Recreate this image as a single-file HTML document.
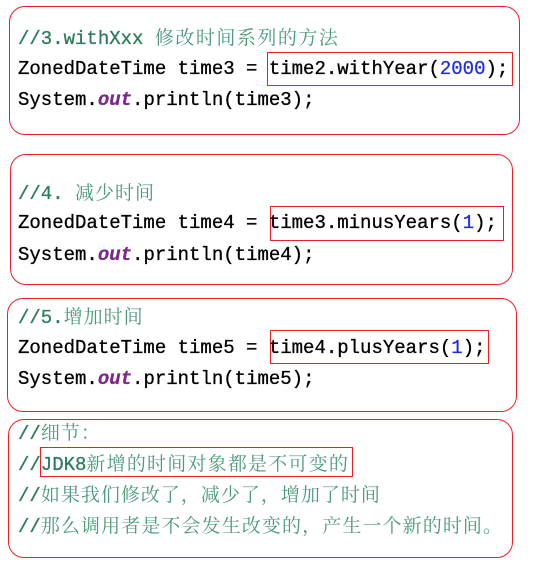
<!DOCTYPE html>
<html><head><meta charset="utf-8"><style>
body{margin:0;width:545px;height:567px;background:#fff;position:relative;overflow:hidden;font-family:"Liberation Mono","Noto Sans CJK SC",monospace;font-size:19px;}
.b{position:absolute;border:1px solid #e8202a;border-radius:16px;box-sizing:border-box;}
.r{position:absolute;border:1px solid #e8202a;box-sizing:border-box;}
.l{position:absolute;left:18px;white-space:pre;line-height:22px;color:#000;-webkit-text-stroke:0.3px;}
.c{color:#2e7d5a;}
.z{font-family:"Noto Serif CJK SC","Noto Sans CJK SC",serif;color:#4a9a78;letter-spacing:1px;-webkit-text-stroke:0;}
.o{color:#7a2b8a;font-style:italic;font-weight:bold;}
.n{color:#1f2fe0;}
</style></head><body>
<div class="b" style="left:9px;top:6px;width:511px;height:129px"></div>
<div class="r" style="left:267px;top:52px;width:246px;height:34px"></div>
<div class="l" style="top:26px"><span class="c">//3.withXxx </span><span class="z" style="letter-spacing:1.5px">修改时间系列的方法</span></div>
<div class="l" style="top:58px">ZonedDateTime time3 = time2.withYear(<span class="n">2000</span>);</div>
<div class="l" style="top:89px">System.<span class="o">out</span>.println(time3);</div>

<div class="b" style="left:10px;top:154px;width:503px;height:131px"></div>
<div class="r" style="left:270px;top:206px;width:234px;height:35px"></div>
<div class="l" style="top:181px"><span class="c">//4. </span><span class="z">减少时间</span></div>
<div class="l" style="top:212px">ZonedDateTime time4 = time3.minusYears(<span class="n">1</span>);</div>
<div class="l" style="top:244px">System.<span class="o">out</span>.println(time4);</div>

<div class="b" style="left:7px;top:298px;width:510px;height:114px"></div>
<div class="r" style="left:270px;top:330px;width:219px;height:34px"></div>
<div class="l" style="top:305px"><span class="c">//5.</span><span class="z">增加时间</span></div>
<div class="l" style="top:337px">ZonedDateTime time5 = time4.plusYears(<span class="n">1</span>);</div>
<div class="l" style="top:368px">System.<span class="o">out</span>.println(time5);</div>

<div class="b" style="left:8px;top:419px;width:505px;height:139px"></div>
<div class="r" style="left:40px;top:447px;width:313px;height:30px"></div>
<div class="l" style="top:421px"><span class="c">//</span><span class="z">细节：</span></div>
<div class="l" style="top:452px"><span class="c">//JDK8</span><span class="z" style="letter-spacing:1.2px">新增的时间对象都是不可变的</span></div>
<div class="l" style="top:483px"><span class="c">//</span><span class="z">如果我们修改了，减少了，增加了时间</span></div>
<div class="l" style="top:514px"><span class="c">//</span><span class="z" style="letter-spacing:1.1px">那么调用者是不会发生改变的，产生一个新的时间。</span></div>
</body></html>
